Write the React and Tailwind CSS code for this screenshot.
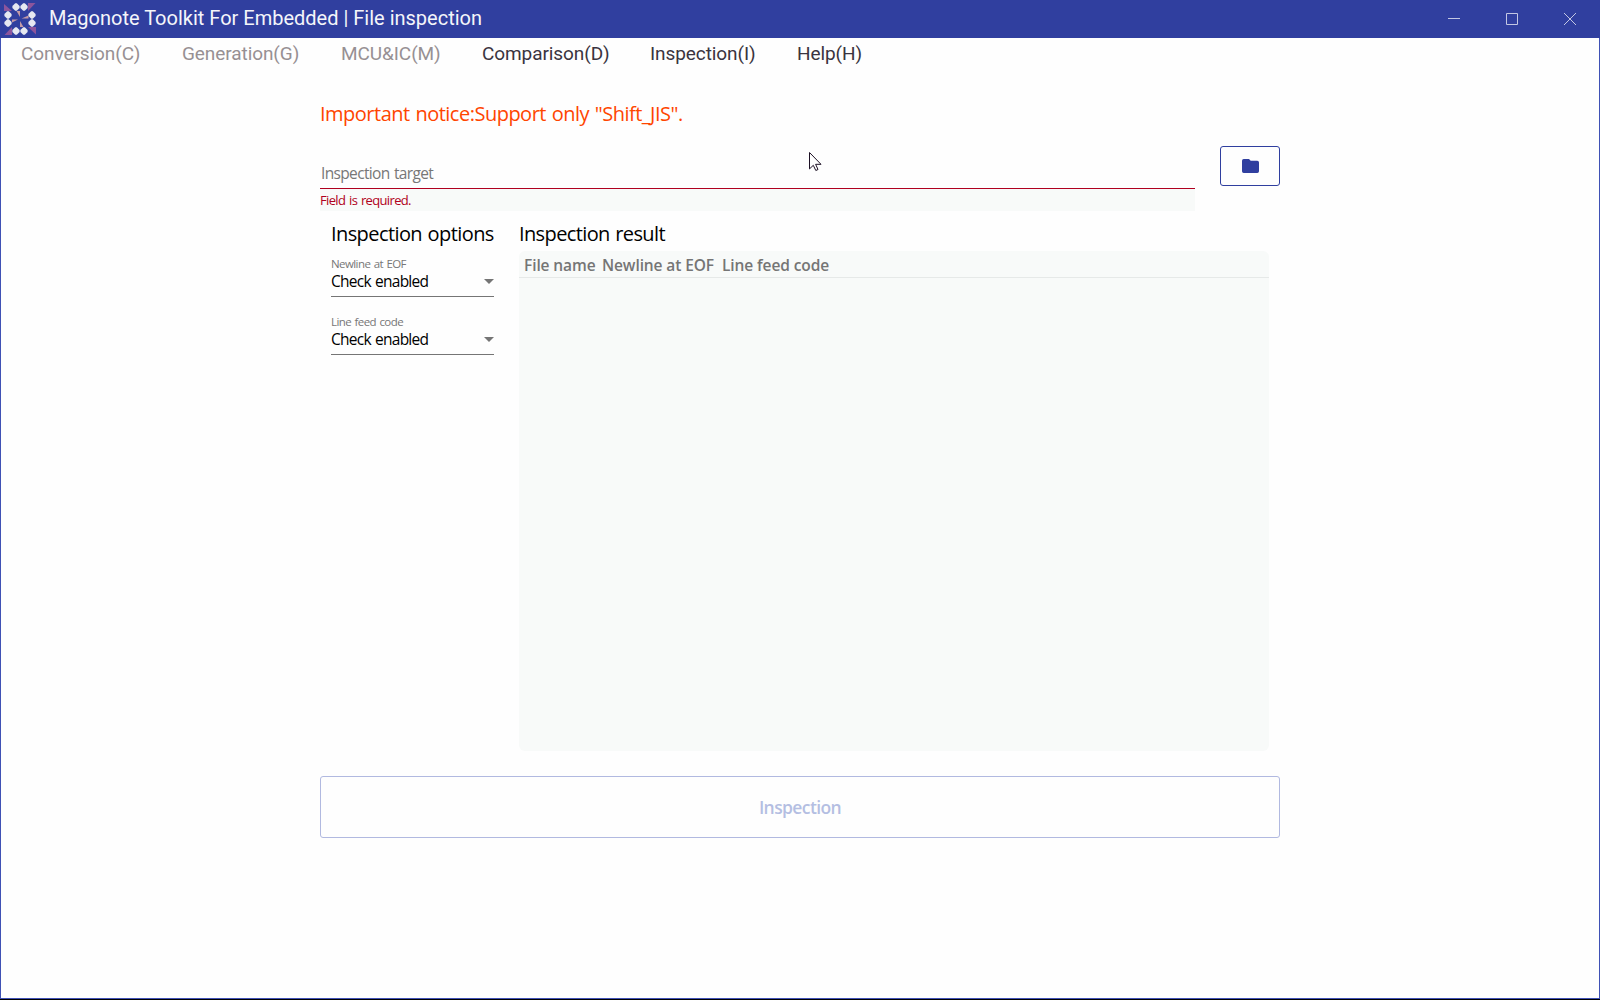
const MENU = [
  { label: 'Conversion(C)', cls: 'w-[161px] text-[#979093]' },
  { label: 'Generation(G)', cls: 'w-[159px] text-[#979093]' },
  { label: 'MCU&IC(M)', cls: 'w-[141px] text-[#979093]' },
  { label: 'Comparison(D)', cls: 'w-[168px] text-[#3a3440]' },
  { label: 'Inspection(I)', cls: 'w-[147px] text-[#3a3440]' },
  { label: 'Help(H)', cls: 'w-[80px] text-[#3a3440]' },
];

const DOTS = [[16, 7], [24, 7], [8, 15], [32, 15], [8, 23], [32, 23], [16, 31], [24, 31]];

function Logo() {
  return (
    <svg className="block h-[38px] w-10 shrink-0" viewBox="0 0 40 38">
      <g fill="#8c559c">
        <path d="M4 4v7h8z" />
        <path d="M28 3h7.500L28 11z" />
        <path d="M28 27h8v7.500z" />
        <path d="M12 27v8H4.500z" />
      </g>
      <g fill="#c39aa6">
        <path d="M16.500 11H20v6z" />
        <path d="M28.500 15.500V18.500h-7z" />
        <path d="M20 21v6h3.500z" />
        <path d="M12 19.500v3l6-3z" />
      </g>
      <g fill="#e6e8f1">
        {DOTS.map(([x, y]) => (
          <path key={`${x}-${y}`} transform={`translate(${x} ${y})`} d="M-.8-3.800h1.600L3.600-.9V.9L.8 3.800H-.8L-3.600 .9V-.9z" />
        ))}
      </g>
    </svg>
  );
}

function TitleBar() {
  return (
    <header className="flex h-[38px] items-center bg-[#303f9f]">
      <Logo />
      <h1 className="ml-[9px] h-[38px] whitespace-nowrap font-['Roboto'] text-[20px] leading-[36px] text-[#f4f5fa]">
        Magonote Toolkit For Embedded | File inspection
      </h1>
      <div className="ml-auto mr-px flex">
        <svg className="h-[38px] w-[58px]" viewBox="0 0 58 38" stroke="#c3c7e3" fill="none">
          <path d="M23 18.500h12" />
        </svg>
        <svg className="h-[38px] w-[58px]" viewBox="0 0 58 38" stroke="#c3c7e3" fill="none">
          <path d="M23.500 13.500h11v11h-11z" />
        </svg>
        <svg className="h-[38px] w-[58px]" viewBox="0 0 58 38" stroke="#c3c7e3" fill="none">
          <path d="M23 13l12 12M35 13L23 25" />
        </svg>
      </div>
    </header>
  );
}

function SelectField({ label, value }) {
  return (
    <div className="h-[58px]">
      <div className="h-4 whitespace-nowrap text-[11.500px] leading-4 tracking-[-0.58px] [word-spacing:1px] text-[#777]">{label}</div>
      <div className="flex h-[25px] items-center justify-between border-b border-[#757575]">
        <span className="-mt-[6px] whitespace-nowrap text-[15.500px] leading-5 tracking-[-0.75px] [word-spacing:1px] text-black">{value}</span>
        <svg className="-mt-[5px] h-[5px] w-[10px]" viewBox="0 0 10 5"><path d="M0 0h10L5 5z" fill="#757575" /></svg>
      </div>
    </div>
  );
}

export default function App() {
  return (
    <div className="relative flex h-[1000px] w-[1600px] flex-col overflow-hidden border-b border-black bg-[#fefefe] font-['Open_Sans',sans-serif]">
      <TitleBar />
      <div className="flex flex-1 flex-col border-x border-b border-[#3f51b5]">
        <nav className="flex h-[30px] pl-[20px] font-['Roboto'] text-[19px] leading-[32px] tracking-[-0.08px]">
          {MENU.map((m) => <span key={m.label} className={m.cls}>{m.label}</span>)}
        </nav>
        <main className="mx-auto w-[960px] pt-[31px]">
          <p className="h-[28px] whitespace-nowrap text-[20px] leading-[30px] tracking-[-0.5px] [word-spacing:1px] text-[#ff4500]">
            Important notice:Support only "Shift_JIS".
          </p>
          <div className="mt-[19px] flex h-[65px] justify-between">
            <div className="w-[875px]">
              <div className="h-[43px] border-b border-[#b00020] pl-px pt-[17px] whitespace-nowrap text-[15.500px] leading-5 tracking-[-0.65px] [word-spacing:1px] text-[#777]">
                <span>Inspection target</span>
              </div>
              <div className="h-[22px] whitespace-nowrap bg-[#f8faf9] text-[13px] leading-[23px] tracking-[-0.65px] [word-spacing:1px] text-[#b00020]">
                <span>Field is required.</span>
              </div>
            </div>
            <button className="flex h-10 w-[60px] items-center justify-center rounded-[3px] border border-[#303f9f]">
              <svg className="h-[14px] w-[17px]" viewBox="0 0 17 14">
                <path d="M1.700 0H7l1.700 1.800h6.600A1.700 1.700 0 0 1 17 3.500v8.800a1.700 1.700 0 0 1-1.700 1.700H1.700A1.700 1.700 0 0 1 0 12.300V1.700A1.700 1.700 0 0 1 1.700 0z" fill="#303f9f" />
              </svg>
            </button>
          </div>
          <div className="mt-[8px] flex pl-[11px]">
            <section className="w-[163px]">
              <h2 className="h-[28px] whitespace-nowrap text-[20px] leading-[30px] tracking-[-0.59px] [word-spacing:1px] text-black">Inspection options</h2>
              <div className="mt-[9px]">
                <SelectField label="Newline at EOF" value="Check enabled" />
                <SelectField label="Line feed code" value="Check enabled" />
              </div>
            </section>
            <section className="ml-[25px] w-[750px]">
              <h2 className="h-[28px] whitespace-nowrap text-[20px] leading-[30px] tracking-[-0.62px] [word-spacing:1px] text-black">Inspection result</h2>
              <div className="mt-[4px] h-[500px] rounded-[6px] bg-[#f8faf9]">
                <div className="flex h-[27px] border-b border-[#e6e9e8] pl-[5px] text-[15.500px] font-semibold leading-[29px] tracking-[-0.1px] whitespace-nowrap text-[#757575]">
                  <span className="w-[78px]">File name</span>
                  <span className="w-[120px]">Newline at EOF</span>
                  <span>Line feed code</span>
                </div>
              </div>
            </section>
          </div>
          <button className="mt-[25px] block h-[62px] w-[960px] rounded-[3px] border border-[#b1b9e0] text-[17.500px] font-semibold tracking-[-0.6px] text-[#b4bee2]">
            Inspection
          </button>
        </main>
      </div>
      <svg className="absolute left-[809px] top-[152px] h-[20px] w-[13px]" viewBox="0 0 13 20">
        <path d="M.5.500v16.400l3.800-3.600 2.500 5.200 2.200-1-2.400-5.200h5.400z" fill="#fff" stroke="#1c1024" />
      </svg>
    </div>
  );
}
